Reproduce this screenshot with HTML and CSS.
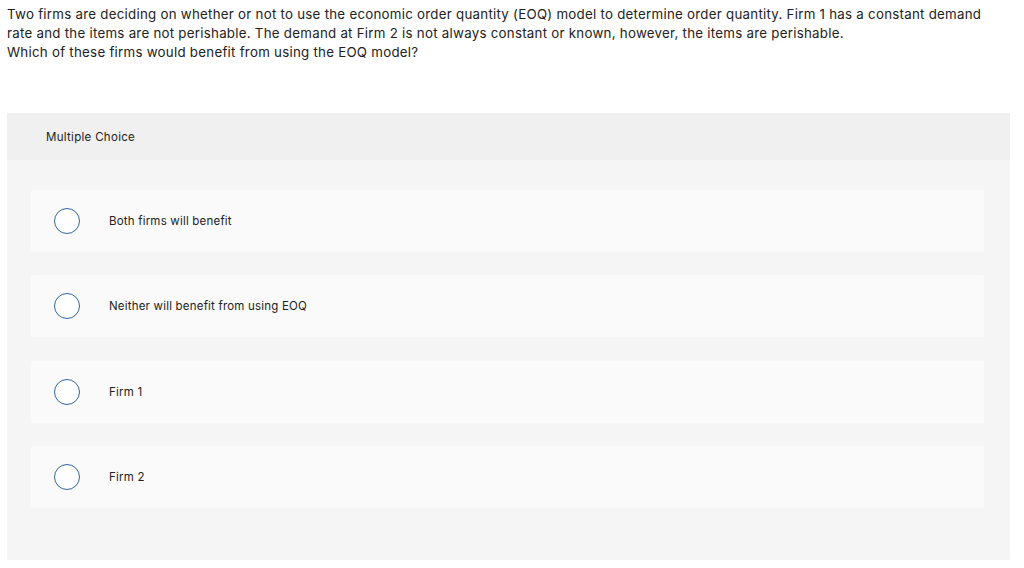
FILE: index.html
```html
<!DOCTYPE html>
<html>
<head>
<meta charset="utf-8">
<link rel="stylesheet" href="styles.css">
</head>
<body>
<div class="question">
  <p>Two firms are deciding on whether or not to use the economic order quantity (EOQ) model to determine order quantity. Firm 1 has a constant demand rate and the items are not perishable. The demand at Firm 2 is not always constant or known, however, the items are perishable.</p>
  <p>Which of these firms would benefit from using the EOQ model?</p>
</div>
<div class="panel">
  <div class="panel-header">Multiple Choice</div>
  <div class="panel-body">
    <div class="option"><span class="radio"></span><span class="label">Both firms will benefit</span></div>
    <div class="option"><span class="radio"></span><span class="label">Neither will benefit from using EOQ</span></div>
    <div class="option"><span class="radio"></span><span class="label">Firm 1</span></div>
    <div class="option"><span class="radio"></span><span class="label">Firm 2</span></div>
  </div>
</div>
</body>
</html>
```
FILE: styles.css
```css
html, body {
  margin: 0;
  padding: 0;
  background: #ffffff;
}
body {
  font-family: Inter, Lato, "Liberation Sans", sans-serif;
  font-variant-ligatures: none;
  color: #222222;
  padding: 5px 14px 0 7px;
}
.question {
  font-size: 13.3px;
  letter-spacing: 0.26px;
  line-height: 19px;
  color: #222;
  padding-right: 15px;
}
.question p {
  margin: 0;
}
.panel {
  margin-top: 51px;
  background: #f5f5f5;
  border-radius: 2px;
}
.panel-header {
  background: #f0f0f0;
  height: 47px;
  display: flex;
  align-items: center;
  padding-left: 39px;
  font-size: 11.5px;
  letter-spacing: 0.3px;
  color: #222;
}
.panel-body {
  padding: 30px 26px 52px 24px;
  display: flex;
  flex-direction: column;
  gap: 23.3px;
}
.option {
  background: #fafafa;
  border-radius: 3px;
  height: 62px;
  display: flex;
  align-items: center;
  padding-left: 23px;
}
.radio {
  width: 24px;
  height: 24px;
  border: 1.5px solid #2d67a0;
  border-radius: 50%;
  background: #ffffff;
  flex: none;
}
.label {
  margin-left: 29px;
  font-size: 11.5px;
  letter-spacing: 0.2px;
  color: #222;
}
```
